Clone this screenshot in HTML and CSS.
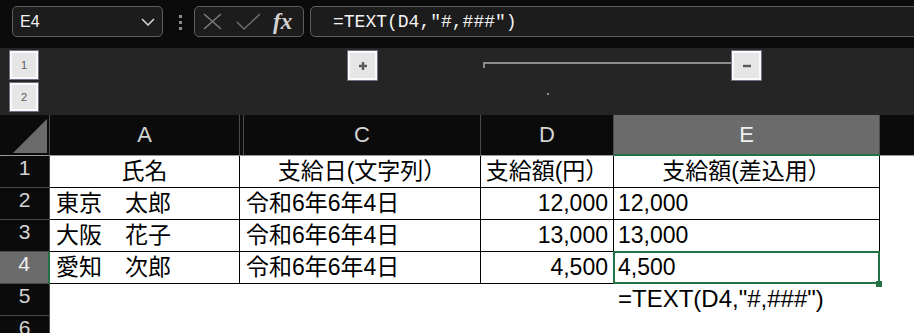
FILE: index.html
```html
<!DOCTYPE html>
<html lang="ja">
<head>
    <meta charset="UTF-8">
    <title>TEXT関数</title>
    <link rel="stylesheet" href="styles.css">
</head>
<body>
    <div class="toolbar">
        <div class="namebox">
            <span>E4</span>
            <svg width="14" height="8" viewBox="0 0 14 8"><polyline points="1,1 7,7 13,1" fill="none" stroke="#d0d0d0" stroke-width="1.6"/></svg>
        </div>
        <div class="grip"><i></i><i></i><i></i></div>
        <div class="fxbox">
            <svg class="ic-x" width="19" height="17" viewBox="0 0 19 17"><path d="M1 1L18 16M18 1L1 16" stroke="#7b7b7b" stroke-width="1.6"/></svg>
            <svg class="ic-ok" width="25" height="18" viewBox="0 0 25 18"><polyline points="1,9 8,16 24,1" fill="none" stroke="#6b6b72" stroke-width="1.6"/></svg>
            <span class="fx">fx</span>
        </div>
        <div class="formula">=TEXT(D4,"#,###")</div>
    </div>

    <div class="outline">
        <div class="levels">
            <div class="obtn">1</div>
            <div class="obtn">2</div>
        </div>
        <div class="ocell center">
            <div class="obtn"><svg width="10" height="10" viewBox="0 0 10 10"><path d="M5 1v8M1 5h8" stroke="#5a5a5a" stroke-width="2.4"/></svg></div>
        </div>
        <div class="ocell"><div class="bracket"></div></div>
        <div class="ocell group-end">
            <div class="gline"></div>
            <div class="obtn"><svg width="10" height="10" viewBox="0 0 10 10"><path d="M1 5h8" stroke="#5a5a5a" stroke-width="2.4"/></svg></div>
        </div>
        <div class="ocell dot-cell"><div class="odot"></div></div>
    </div>

    <div class="sheet">
        <div class="corner"><div class="tri"></div></div>
        <div class="ch">A</div>
        <div class="ch"></div>
        <div class="ch">C</div>
        <div class="ch">D</div>
        <div class="ch on">E</div>
        <div class="ch blank"></div>

        <div class="rh">1</div>
        <div class="c center">氏名</div>
        <div class="c gap"></div>
        <div class="c center">支給日(文字列）</div>
        <div class="c center">支給額(円）</div>
        <div class="c center">支給額(差込用）</div>
        <div class="c none"></div>

        <div class="rh">2</div>
        <div class="c a">東京　太郎</div>
        <div class="c gap"></div>
        <div class="c cc">令和6年6年4日</div>
        <div class="c num">12,000</div>
        <div class="c e">12,000</div>
        <div class="c none"></div>

        <div class="rh">3</div>
        <div class="c a">大阪　花子</div>
        <div class="c gap"></div>
        <div class="c cc">令和6年6年4日</div>
        <div class="c num">13,000</div>
        <div class="c e">13,000</div>
        <div class="c none"></div>

        <div class="rh on">4</div>
        <div class="c a">愛知　次郎</div>
        <div class="c gap"></div>
        <div class="c cc">令和6年6年4日</div>
        <div class="c num">4,500</div>
        <div class="c e sel">4,500</div>
        <div class="c none"></div>

        <div class="rh">5</div>
        <div class="c none"></div>
        <div class="c none"></div>
        <div class="c none"></div>
        <div class="c none"></div>
        <div class="c none e note">=TEXT(D4,"#,###")</div>
        <div class="c none"></div>

        <div class="rh">6</div>
    </div>
</body>
</html>
```

FILE: styles.css
```css
body {
    margin: 0;
    width: 914px;
    height: 333px;
    overflow: hidden;
    background: #fff;
    font-family: "Liberation Sans", "Noto Sans CJK JP", sans-serif;
}

/* formula bar */
.toolbar {
    height: 48px;
    box-sizing: border-box;
    padding: 6px 0 0 12px;
    background: #0b0b0b;
    display: flex;
    align-items: flex-start;
}
.namebox, .fxbox, .formula {
    height: 31px;
    box-sizing: border-box;
    border: 1px solid #5e5e5e;
    border-radius: 5px;
    background: #1c1c1c;
    display: flex;
    align-items: center;
}
.namebox {
    width: 151px;
    justify-content: space-between;
    padding: 0 7px;
    color: #f2f2f2;
    font-size: 16px;
}
.grip {
    width: 3px;
    margin: 9px 12px 0 16px;
    display: flex;
    flex-direction: column;
    gap: 3px;
}
.grip i {
    width: 3px;
    height: 3px;
    background: #8a8a8a;
}
.fxbox {
    width: 110px;
    padding-left: 8px;
}
.ic-ok {
    margin-left: 14px;
}
.fx {
    margin-left: 12px;
    color: #d2d2d2;
    font-family: "Liberation Serif", serif;
    font-style: italic;
    font-weight: bold;
    font-size: 23px;
    line-height: 1;
}
.formula {
    flex: 1;
    margin: 0 -10px 0 6px;
    padding-left: 22px;
    color: #f4f4f4;
    font-family: "Liberation Mono", monospace;
    font-size: 18px;
}

/* outline / grouping strip */
.outline, .sheet {
    display: grid;
    grid-template-columns: 50px 190px 4px 237px 133px 266px 1fr;
}
.outline {
    height: 67px;
    grid-template-rows: 34px 33px;
    background: #252525;
}
.levels {
    grid-row: 1 / 3;
    padding: 2px 0 0 9px;
    display: flex;
    flex-direction: column;
    gap: 2px;
}
.ocell.center {
    grid-column: 4;
    display: flex;
    justify-content: center;
    padding-top: 2px;
}
.obtn {
    width: 31px;
    height: 31px;
    box-sizing: border-box;
    border: 1px solid #6e7383;
    box-shadow: inset 0 0 0 2px #fafafa;
    background: #e6e6e6;
    color: #5c5c5c;
    font-size: 11px;
    display: flex;
    align-items: center;
    justify-content: center;
}
.levels .obtn {
    width: 30px;
    height: 30px;
}
.bracket {
    height: 6px;
    margin: 14px 0 0 2px;
    box-sizing: border-box;
    border-top: 2px solid #8c8c8c;
    border-left: 2px solid #8c8c8c;
}
.group-end {
    display: grid;
    grid-template-columns: 117px 31px 1fr;
    align-items: start;
    padding-top: 2px;
}
.gline {
    height: 2px;
    margin-top: 12px;
    background: #8c8c8c;
}
.dot-cell {
    grid-column: 5;
    grid-row: 2;
    display: flex;
    justify-content: center;
    padding-top: 11px;
}
.odot {
    width: 2px;
    height: 2px;
    background: #8c8c8c;
}

/* sheet */
.sheet {
    grid-template-rows: 41px repeat(6, 32px);
}
.corner, .ch, .rh {
    background: #0b0b0b;
    box-sizing: border-box;
    border-right: 1px solid #4c4c4c;
}
.corner, .ch {
    border-bottom: 1px solid #9a9a9a;
}
.corner {
    display: flex;
    align-items: flex-end;
    justify-content: flex-end;
    padding: 0 2px 2px 0;
}
.tri {
    width: 34px;
    height: 34px;
    background: #6b6b6b;
    clip-path: polygon(100% 0, 100% 100%, 0 100%);
}
.ch {
    color: #d4d4d4;
    font-size: 22px;
    text-align: center;
    line-height: 40px;
}
.ch.on {
    background: #6b6b6b;
    border-bottom: 2px solid #217346;
    color: #f0f0f0;
}
.ch.blank {
    border-right: none;
}
.rh {
    color: #d4d4d4;
    font-size: 21px;
    line-height: 24px;
    text-align: center;
    border-bottom: 1px solid #474747;
}
.rh.on {
    background: #6b6b6b;
    border-right: 2px solid #217346;
    color: #f0f0f0;
}

.c {
    box-sizing: border-box;
    border-right: 1px solid #000;
    border-bottom: 1px solid #000;
    color: #000;
    font-size: 23px;
    line-height: 30px;
    white-space: nowrap;
}
.c.none {
    border: none;
}
.c.gap {
    border-right: none;
}
.center {
    text-align: center;
}
.a {
    padding-left: 6px;
}
.cc {
    padding-left: 2px;
}
.num {
    text-align: right;
    padding-right: 5px;
}
.e {
    padding-left: 4px;
}
.note {
    font-size: 24px;
}
.sel {
    position: relative;
}
.sel::after {
    content: "";
    position: absolute;
    left: -1px;
    top: -1px;
    right: -1px;
    bottom: -1px;
    border: 2px solid #217346;
}
.sel::before {
    content: "";
    position: absolute;
    right: -3px;
    bottom: -4px;
    width: 6px;
    height: 6px;
    background: #217346;
    z-index: 1;
}
```
